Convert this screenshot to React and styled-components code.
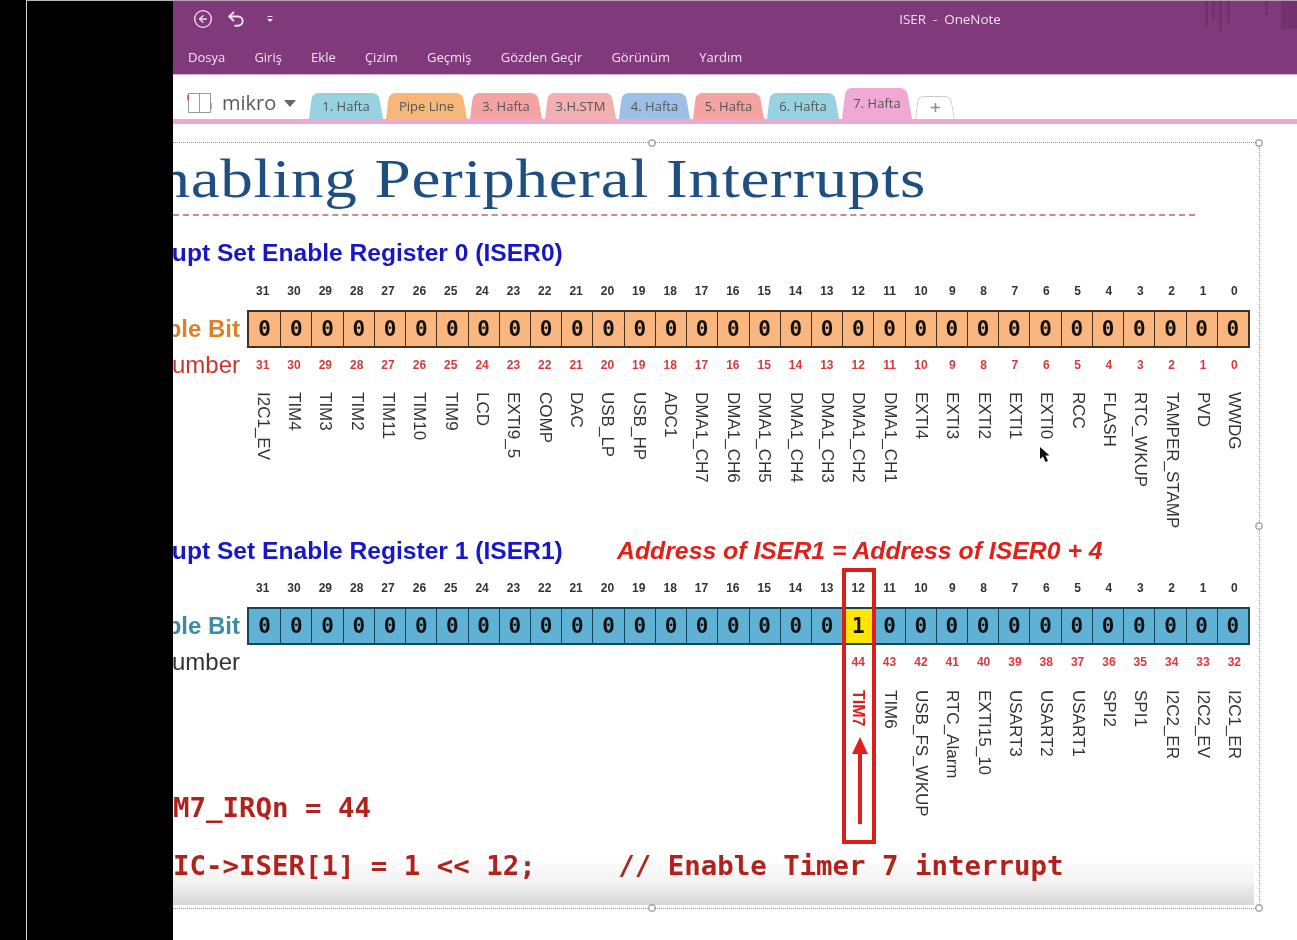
import React from "react";
import styled, { createGlobalStyle } from "styled-components";
import { CircleArrowLeft, Undo2 } from "lucide-react";

const MENU = ["Dosya", "Giriş", "Ekle", "Çizim", "Geçmiş", "Gözden Geçir", "Görünüm", "Yardım"];

const TABS = [
  { label: "1. Hafta", color: "#96d2e0", width: 74 },
  { label: "Pipe Line", color: "#f5b878", width: 81 },
  { label: "3. Hafta", color: "#f4a3a3", width: 72 },
  { label: "3.H.STM", color: "#f2b0b0", width: 71 },
  { label: "4. Hafta", color: "#9cc0e6", width: 71 },
  { label: "5. Hafta", color: "#f4a3a0", width: 71 },
  { label: "6. Hafta", color: "#96d2e0", width: 72 },
];

const ISER0_NAMES = [
  "I2C1_EV", "TIM4", "TIM3", "TIM2", "TIM11", "TIM10", "TIM9", "LCD", "EXTI9_5", "COMP", "DAC",
  "USB_LP", "USB_HP", "ADC1", "DMA1_CH7", "DMA1_CH6", "DMA1_CH5", "DMA1_CH4", "DMA1_CH3", "DMA1_CH2",
  "DMA1_CH1", "EXTI4", "EXTI3", "EXTI2", "EXTI1", "EXTI0", "RCC", "FLASH", "RTC_WKUP", "TAMPER_STAMP",
  "PVD", "WWDG",
];

const ISER1_NAMES = [
  ...Array(19).fill(""), "TIM7", "TIM6", "USB_FS_WKUP", "RTC_Alarm", "EXTI15_10", "USART3", "USART2",
  "USART1", "SPI2", "SPI1", "I2C2_ER", "I2C2_EV", "I2C1_ER",
];

const BIT_NUMBERS = Array.from({ length: 32 }, (_, i) => 31 - i);
const ISER1_IRQS = BIT_NUMBERS.map((n) => (n > 12 ? "" : n + 32));

const GlobalStyle = createGlobalStyle`
  html, body {
    margin: 0;
    padding: 0;
    background: #000;
  }
`;

const Screen = styled.div`
  display: flex;
  width: 1297px;
  height: 940px;
  overflow: hidden;
  background: #000;
  font-family: "Open Sans", "Liberation Sans", sans-serif;
`;

const BlackSide = styled.div`
  flex: 0 0 173px;
  display: flex;
`;

const Gutter = styled.div`
  flex: 0 0 26px;
`;

const SideEdge = styled.div`
  flex: 1;
  border-left: 1px solid #d8d8d8;
  border-top: 1px solid #b8b8b8;
`;

const Main = styled.div`
  flex: 1;
  min-width: 0;
  display: flex;
  flex-direction: column;
  background: #fff;
  filter: blur(0.45px);
`;

const TitleBar = styled.header`
  position: relative;
  flex: 0 0 74px;
  display: flex;
  flex-direction: column;
  background: #80397a;
  border-top: 1px solid #b8a0b4;
  border-bottom: 1px solid #d9b4d6;
  box-sizing: border-box;
  color: #efe3ee;
`;

const QuickRow = styled.div`
  flex: 0 0 36px;
  display: grid;
  grid-template-columns: 1fr auto 1fr;
  align-items: center;
  font-size: 13.4px;
`;

const QuickIcons = styled.div`
  display: flex;
  align-items: center;
  padding-left: 20px;
  gap: 13px;
`;

const QuickCaret = styled.svg`
  width: 8px;
  height: 8px;
  margin-left: 7px;
`;

const WindowTitle = styled.div`
  white-space: pre;
  transform: translateX(215px);
`;

const BarPattern = styled.svg`
  position: absolute;
  right: 0;
  top: 0;
  width: 100px;
  height: 40px;
`;

const MenuRow = styled.nav`
  display: flex;
  gap: 29.2px;
  padding: 3px 0 0 15px;
  font-size: 13px;
  line-height: 34px;
`;

const TabStrip = styled.div`
  flex: 0 0 49px;
  display: flex;
  align-items: flex-end;
  box-sizing: border-box;
  border-bottom: 5px solid #eea9d2;
`;

const Notebook = styled.div`
  flex: 0 0 136px;
  display: flex;
  align-items: center;
  align-self: flex-start;
  padding: 14px 0 0 14px;
  box-sizing: border-box;
  color: #5a5a5a;
  font-size: 20px;
  line-height: 28px;
`;

const NotebookName = styled.span`
  margin: 0 8px 0 9px;
`;

const Tabs = styled.div`
  display: flex;
  align-items: flex-end;
  gap: 3px;
`;

const Tab = styled.div`
  position: relative;
  width: ${(p) => p.$width}px;
  height: ${(p) => (p.$active ? 31 : p.$plain ? 23 : 26)}px;
  display: flex;
  align-items: center;
  justify-content: center;
  padding-bottom: ${(p) => (p.$active ? 2 : 0)}px;
  box-sizing: border-box;
  color: ${(p) => (p.$plain ? "#8a8a8a" : "#55555a")};
  font-size: 13px;
  z-index: ${(p) => (p.$active ? 1 : 0)};

  &::before,
  &::after {
    content: "";
    position: absolute;
    top: 0;
    bottom: 0;
    width: 60%;
    z-index: -1;
    background: ${(p) => p.$color};
    border: ${(p) => (p.$plain ? "1px solid #c9c9c9" : "none")};
    border-bottom: none;
    box-sizing: border-box;
  }

  &::before {
    left: 0;
    border-right: none;
    border-radius: 6px 0 0 0;
    transform: skewX(-7deg);
    transform-origin: bottom left;
  }

  &::after {
    right: 0;
    border-left: none;
    border-radius: 0 6px 0 0;
    transform: skewX(10deg);
    transform-origin: bottom right;
  }
`;

const Canvas = styled.div`
  flex: 1;
  padding: 18px 37px 0 0;
  min-height: 0;
`;

const Slide = styled.section`
  position: relative;
  height: 767px;
  box-sizing: border-box;
  border-top: 1px dotted #8c8c8c;
  border-right: 1px dotted #8c8c8c;
  border-bottom: 1px dotted #8c8c8c;
`;

const Handle = styled.span`
  position: absolute;
  width: 7px;
  height: 7px;
  box-sizing: border-box;
  background: #fff;
  border: 1px solid #777;
  border-radius: 2px;
  left: ${(p) => p.$x};
  top: ${(p) => p.$y};
  transform: translate(-50%, -50%);
  z-index: 3;
`;

const SlideBody = styled.div`
  position: relative;
  height: 100%;
  overflow: hidden;
`;

const SlideTitle = styled.h1`
  margin: 0 0 0 -56px;
  height: 71px;
  font: 400 54px/72px "Liberation Serif", serif;
  letter-spacing: 0.55px;
  color: #1f4e82;
  white-space: nowrap;
  transform: scaleX(1.207);
  transform-origin: left center;
`;

const TitleRule = styled.div`
  width: 1022px;
  border-top: 2px dashed #cc8a8a;
`;

const Register = styled.div`
  position: relative;
`;

const HeadingRow = styled.div`
  height: 36px;
  margin-top: ${(p) => p.$top}px;
  display: flex;
  align-items: center;
  white-space: nowrap;
`;

const Heading = styled.h2`
  margin: 0 0 0 -64px;
  flex: 0 0 454px;
  font: 700 24.6px/36px "Liberation Sans", sans-serif;
  color: #1717c4;
`;

const AddressNote = styled.span`
  font: italic 700 24.8px/36px "Liberation Sans", sans-serif;
  color: #e0201a;
  margin-left: 54px;
`;

const Row = styled.div`
  display: grid;
  grid-template-columns: 74px 1003px;
  margin-top: ${(p) => p.$top}px;
  align-items: center;
`;

const SideLabel = styled.div`
  display: flex;
  align-items: center;
  justify-content: flex-end;
  height: 20px;
  padding-right: 7px;
  font: ${(p) => (p.$bold ? 700 : 400)} 24px/30px "Liberation Sans", sans-serif;
  color: ${(p) => p.$color};
  white-space: nowrap;
`;

const Cells = styled.div`
  display: grid;
  grid-template-columns: repeat(32, 1fr);
`;

const NumberCell = styled.div`
  text-align: center;
  font: 700 12px/20px "Liberation Sans", sans-serif;
  color: ${(p) => p.$color};
  min-height: 20px;
`;

const BitRow = styled(Cells)`
  height: 38px;
  box-sizing: border-box;
  border: 2px solid ${(p) => p.$edge};
  background: ${(p) => p.$color};
`;

const Bit = styled.div`
  display: flex;
  align-items: center;
  justify-content: center;
  border-left: ${(p) => (p.$first ? "none" : `1.5px solid ${p.$edge}`)};
  background: ${(p) => (p.$on ? "#ffe600" : "transparent")};
  font: 700 21px/1 "DejaVu Sans Mono", "Liberation Mono", monospace;
  color: #111;
`;

const NameGrid = styled(Cells)`
  height: ${(p) => p.$height}px;
`;

const NameCell = styled.div`
  display: flex;
  flex-direction: column;
  align-items: center;
  gap: 11px;
`;

const Name = styled.span`
  writing-mode: vertical-rl;
  font: 400 17px/20px "Liberation Sans", sans-serif;
  color: ${(p) => p.$color || "#333"};
  white-space: nowrap;
`;

const SmallName = styled(Name)`
  font-size: 16px;
  font-weight: 700;
  line-height: 18px;
`;

const ArrowIcon = styled.svg`
  margin-left: 3px;
`;

const Highlight = styled.div`
  position: absolute;
  left: 669px;
  top: 35px;
  width: 34px;
  height: 276px;
  box-sizing: border-box;
  border: 4px solid #d9201a;
  pointer-events: none;
`;

const Cursor = styled.svg`
  position: absolute;
  left: 866px;
  top: 211px;
  width: 12px;
  height: 18px;
`;

const CodeLine = styled.div`
  margin: 0 0 0 -33px;
  font: 700 27.4px/36px "DejaVu Sans Mono", "Liberation Mono", monospace;
  color: #b0221b;
  white-space: pre;
`;

const CodeBand = styled.div`
  margin: 12px 5px 0 0;
  padding-top: 10px;
  height: 67px;
  box-sizing: border-box;
  background: linear-gradient(to bottom, #fff 25%, #f3f3f3 65%, #d6d6d6 100%);
`;

const notebookIcon = (
  <svg width="26" height="22" viewBox="0 0 26 22" fill="none">
    <rect x="1.5" y="1.5" width="22" height="19" fill="#fff" stroke="#9a9a9a" />
    <line x1="12.5" y1="1.5" x2="12.5" y2="20.5" stroke="#9a9a9a" />
    <line x1="1" y1="3" x2="1" y2="8" stroke="#d33" strokeWidth="1.4" />
    <line x1="24" y1="11" x2="24" y2="17" stroke="#5aa" strokeWidth="1.4" />
  </svg>
);

const RegisterBlock = ({ number, note, top, color, edge, labelColor, irqColor, irqs, names, nameHeight, gaps, onBit, children }) => (
  <Register>
    <HeadingRow $top={top}>
      <Heading>Interrupt Set Enable Register {number} (ISER{number})</Heading>
      {note && <AddressNote>{note}</AddressNote>}
    </HeadingRow>
    <Row $top={gaps.number}>
      <span />
      <Cells>
        {BIT_NUMBERS.map((n) => (
          <NumberCell key={n} $color="#333">{n}</NumberCell>
        ))}
      </Cells>
    </Row>
    <Row $top={9}>
      <SideLabel $bold $color={labelColor}>Enable Bit</SideLabel>
      <BitRow $color={color} $edge={edge}>
        {BIT_NUMBERS.map((n, i) => (
          <Bit key={n} $first={i === 0} $edge={edge} $on={n === onBit}>{n === onBit ? 1 : 0}</Bit>
        ))}
      </BitRow>
    </Row>
    <Row $top={7}>
      <SideLabel $color={irqColor}>IRQ Number</SideLabel>
      <Cells>
        {irqs.map((n, i) => (
          <NumberCell key={i} $color="#d8393a">{n}</NumberCell>
        ))}
      </Cells>
    </Row>
    <Row $top={gaps.name}>
      <span />
      <NameGrid $height={nameHeight}>
        {names.map((name, i) =>
          name === "TIM7" ? (
            <NameCell key={i}>
              <SmallName $color="#d9201a">{name}</SmallName>
              <ArrowIcon width="16" height="88" viewBox="0 0 16 88">
                <path d="M8 0 L16 17 L10 17 L10 87 L6 87 L6 17 L0 17 Z" fill="#e0201a" />
              </ArrowIcon>
            </NameCell>
          ) : (
            <NameCell key={i}>{name && <Name>{name}</Name>}</NameCell>
          )
        )}
      </NameGrid>
    </Row>
    {children}
  </Register>
);

export default function App() {
  return (
    <Screen>
      <GlobalStyle />
      <BlackSide>
        <Gutter />
        <SideEdge />
      </BlackSide>
      <Main>
        <TitleBar>
          <QuickRow>
            <QuickIcons>
              <CircleArrowLeft size={20} strokeWidth={1.6} />
              <Undo2 size={20} strokeWidth={2.4} />
              <QuickCaret viewBox="0 0 8 8">
                <rect x="1.5" y="1" width="5" height="1" fill="currentColor" />
                <path d="M1 4 H7 L4 7 Z" fill="currentColor" />
              </QuickCaret>
            </QuickIcons>
            <WindowTitle>ISER  -  OneNote</WindowTitle>
            <span />
          </QuickRow>
          <MenuRow>
            {MENU.map((item) => (
              <span key={item}>{item}</span>
            ))}
          </MenuRow>
          <BarPattern viewBox="0 0 100 40">
            <g fill="#6f2f6a" opacity="0.75">
              <rect x="8" y="0" width="3" height="26" />
              <rect x="15" y="0" width="3" height="20" />
              <rect x="22" y="0" width="3" height="30" />
              <rect x="30" y="0" width="3" height="22" />
              <rect x="68" y="0" width="3" height="14" />
              <rect x="84" y="0" width="16" height="28" />
            </g>
          </BarPattern>
        </TitleBar>
        <TabStrip>
          <Notebook>
            {notebookIcon}
            <NotebookName>mikro</NotebookName>
            <svg width="12" height="7" viewBox="0 0 12 7">
              <path d="M0 0 H12 L6 7 Z" fill="#666" />
            </svg>
          </Notebook>
          <Tabs>
            {TABS.map((t) => (
              <Tab key={t.label} $width={t.width} $color={t.color}>{t.label}</Tab>
            ))}
            <Tab $width={70} $color="#efa9d3" $active>7. Hafta</Tab>
            <Tab $width={40} $color="#fff" $plain>
              <svg width="11" height="11" viewBox="0 0 11 11">
                <path d="M5.5 1 V10 M1 5.5 H10" stroke="#8f8f8f" strokeWidth="1.6" />
              </svg>
            </Tab>
          </Tabs>
        </TabStrip>
        <Canvas>
          <Slide>
            <SlideBody>
              <SlideTitle>Enabling Peripheral Interrupts</SlideTitle>
              <TitleRule />
              <RegisterBlock
                number={0}
                top={19}
                color="#f9b67e"
                edge="#43301f"
                labelColor="#d9822b"
                irqColor="#c8382f"
                irqs={BIT_NUMBERS}
                names={ISER0_NAMES}
                nameHeight={138}
                gaps={{ number: 10, name: 17 }}
              >
                <Cursor viewBox="0 0 12 18">
                  <path d="M1 1 L1 13 L4 10.5 L6.5 16 L9 15 L6.5 9.5 L10.5 9.5 Z" fill="#111" />
                </Cursor>
              </RegisterBlock>
              <RegisterBlock
                number={1}
                note="Address of ISER1 = Address of ISER0 + 4"
                top={3}
                color="#5fb2d4"
                edge="#17465c"
                labelColor="#3d8ba8"
                irqColor="#333"
                irqs={ISER1_IRQS}
                names={ISER1_NAMES}
                nameHeight={100}
                gaps={{ number: 9, name: 18 }}
                onBit={12}
              >
                <Highlight />
              </RegisterBlock>
              <CodeLine>TIM7_IRQn = 44</CodeLine>
              <CodeBand>
                <CodeLine>{"NVIC->ISER[1] = 1 << 12;     // Enable Timer 7 interrupt"}</CodeLine>
              </CodeBand>
            </SlideBody>
            <Handle $x="479px" $y="0" />
            <Handle $x="100%" $y="0" />
            <Handle $x="100%" $y="50%" />
            <Handle $x="479px" $y="100%" />
            <Handle $x="100%" $y="100%" />
          </Slide>
        </Canvas>
      </Main>
    </Screen>
  );
}
